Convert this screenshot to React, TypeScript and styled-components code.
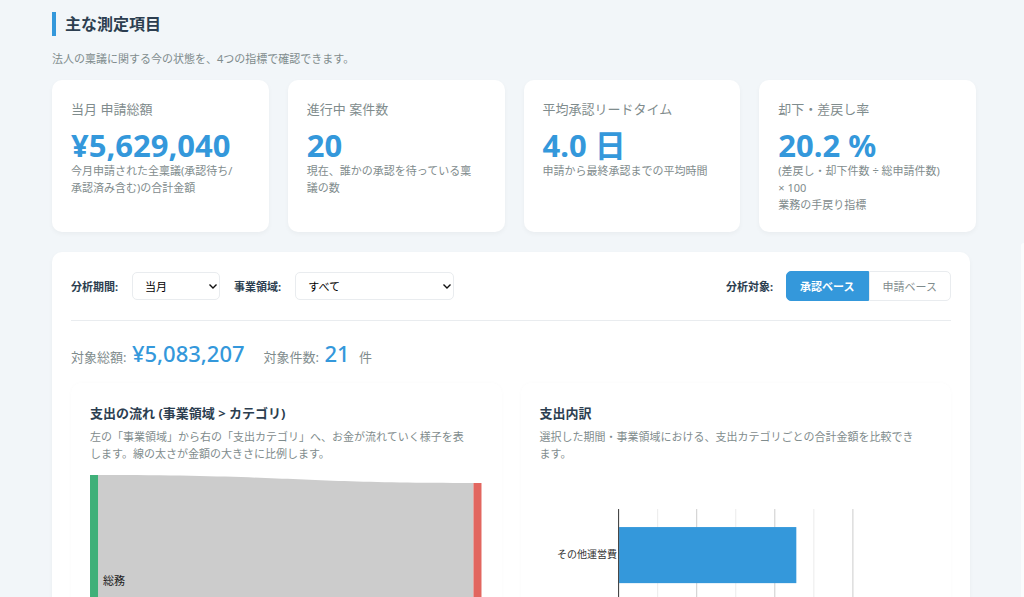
import React from 'react';
import styled, { createGlobalStyle } from 'styled-components';

const GlobalStyle = createGlobalStyle`
  * { box-sizing: border-box; }
  body {
    margin: 0;
    background: #f2f6f9;
    color: #2c3e50;
    font-family: "Noto Sans", "Noto Sans CJK JP", sans-serif;
  }
  h2, h3, p { margin: 0; }
  button, select { font-family: inherit; }
  ::-webkit-scrollbar { display: none; }
`;

const Page = styled.main`
  padding: 12px 48px 48px 52px;
`;

const SectionTitle = styled.h2`
  border-left: 4px solid #3498db;
  padding-left: 9px;
  font-size: 16px;
  line-height: 24px;
  font-weight: 700;
`;

const Lead = styled.p`
  margin: 14px 0 13px;
  color: #7f8c8d;
  font-size: 11px;
  line-height: 17px;
`;

const KpiGrid = styled.div`
  display: grid;
  grid-template-columns: repeat(4, 1fr);
  gap: 19px;
`;

const Card = styled.section`
  background: #fff;
  border-radius: 10px;
  box-shadow: 0 2px 5px rgba(0, 0, 0, 0.04);
`;

const KpiCard = styled(Card)`
  padding: 19px;
`;

const KpiName = styled.h3`
  color: #7f8c8d;
  font-size: 13px;
  line-height: 20px;
  font-weight: 400;
`;

const KpiValue = styled.p`
  margin-top: 9px;
  color: #3498db;
  font-size: 31px;
  line-height: 34px;
  font-weight: 700;
`;

const Description = styled.p`
  color: #7f8c8d;
  font-size: 11px;
  line-height: 17px;
  white-space: nowrap;
`;

const Panel = styled(Card)`
  margin: 20px 6px 0 0;
  padding: 19px;
`;

const Toolbar = styled.div`
  display: flex;
  align-items: center;
  gap: 14px;
  padding-bottom: 19px;
  border-bottom: 1px solid #e9ecef;
`;

const FieldLabel = styled.label`
  font-size: 11px;
  line-height: 17px;
  font-weight: 700;
`;

const SelectBox = styled.span<{ $width: number }>`
  position: relative;
  display: flex;
  width: ${(p) => p.$width}px;
`;

const Select = styled.select`
  appearance: none;
  width: 100%;
  height: 28px;
  padding: 0 12px;
  border: 1px solid #e9ecef;
  border-radius: 5px;
  background: #fff;
  color: #000;
  font-size: 11px;
`;

const Chevron = styled.svg`
  position: absolute;
  right: 2px;
  top: 11px;
  pointer-events: none;
`;

const Target = styled.div`
  display: flex;
  align-items: center;
  gap: 13px;
  margin-left: auto;
`;

const Segments = styled.div`
  display: flex;
`;

const Segment = styled.button<{ $active?: boolean }>`
  height: 30px;
  padding: 0 13px;
  border: 1px solid ${(p) => (p.$active ? '#3498db' : '#e9ecef')};
  border-radius: ${(p) => (p.$active ? '5px 0 0 5px' : '0 5px 5px 0')};
  background: ${(p) => (p.$active ? '#3498db' : '#fff')};
  color: ${(p) => (p.$active ? '#fff' : '#7f8c8d')};
  font-size: 11px;
  font-weight: ${(p) => (p.$active ? 700 : 400)};
`;

const Totals = styled.div`
  display: flex;
  gap: 13px;
  margin: 16px 0 10px;
  color: #7f8c8d;
  font-size: 13px;
  line-height: 32px;
`;

const TotalValue = styled.strong`
  margin: 0 6px 0 2px;
  color: #3498db;
  font-size: 22px;
  font-weight: 500;
`;

const Charts = styled.div`
  display: grid;
  grid-template-columns: 1fr 1fr;
  gap: 19px;
`;

const ChartCard = styled(Card)`
  padding: 20px 19px;
  box-shadow: 0 0 4px rgba(0, 0, 0, 0.02);
`;

const ChartTitle = styled.h3`
  margin-bottom: 5px;
  font-size: 13px;
  line-height: 20px;
  font-weight: 700;
`;

const Chart = styled.svg`
  display: block;
  width: 100%;
  margin-top: 13px;
  font-family: inherit;
`;

const DrawerEdge = styled.aside`
  position: fixed;
  top: 243px;
  right: 0;
  bottom: 0;
  width: 3px;
  border-radius: 3px 0 0 0;
  background: #fafcfd;
`;

const kpis = [
  { name: '当月 申請総額', value: '¥5,629,040', lines: ['今月申請された全稟議(承認待ち/', '承認済み含む)の合計金額'] },
  { name: '進行中 案件数', value: '20', lines: ['現在、誰かの承認を待っている稟', '議の数'] },
  { name: '平均承認リードタイム', value: '4.0 日', lines: ['申請から最終承認までの平均時間'] },
  { name: '却下・差戻し率', value: '20.2 %', lines: ['(差戻し・却下件数 ÷ 総申請件数)', '× 100', '業務の手戻り指標'] },
];

function Lines({ lines }: { lines: string[] }) {
  return (
    <Description>
      {lines.map((line, i) => (
        <React.Fragment key={line}>
          {i > 0 && <br />}
          {line}
        </React.Fragment>
      ))}
    </Description>
  );
}

function Dropdown({ id, width, value }: { id: string; width: number; value: string }) {
  return (
    <SelectBox $width={width}>
      <Select id={id}>
        <option>{value}</option>
      </Select>
      <Chevron width="10" height="7" viewBox="0 0 10 7" fill="none" stroke="#111" strokeWidth="1.4" aria-hidden="true">
        <path d="M1.5 1.5 L5 5 L8.5 1.5" />
      </Chevron>
    </SelectBox>
  );
}

function FlowChart() {
  return (
    <Chart viewBox="0 0 392 230" role="img" aria-label="支出の流れ">
      <path d="M8 0 C200 0 200 8 383 8 V222 C200 222 200 214 8 214 Z" fill="#ccc" />
      <rect x="0" y="0" width="8" height="214" fill="#3fb079" />
      <rect x="383" y="8" width="8" height="214" fill="#e2665f" />
      <text x="13" y="110" fontSize="11" fill="#222">総務</text>
    </Chart>
  );
}

function BreakdownChart() {
  const ticks = [1, 2, 3, 4, 5, 6];
  return (
    <Chart viewBox="0 0 392 230" role="img" aria-label="支出内訳">
      {ticks.map((t) => (
        <rect key={t} x={78 + t * 39} y="34" width="1" height="180" fill={t % 2 ? '#ebebeb' : '#ccc'} />
      ))}
      <rect x="79" y="52" width="177" height="56" fill="#3498db" />
      <rect x="78" y="34" width="1" height="180" fill="#333" />
      <text x="77" y="83" fontSize="10" fill="#333" textAnchor="end">その他運営費</text>
    </Chart>
  );
}

export default function App() {
  return (
    <>
      <GlobalStyle />
      <Page>
        <SectionTitle>主な測定項目</SectionTitle>
        <Lead>法人の稟議に関する今の状態を、4つの指標で確認できます。</Lead>
        <KpiGrid>
          {kpis.map((k) => (
            <KpiCard key={k.name}>
              <KpiName>{k.name}</KpiName>
              <KpiValue>{k.value}</KpiValue>
              <Lines lines={k.lines} />
            </KpiCard>
          ))}
        </KpiGrid>

        <Panel>
          <Toolbar>
            <FieldLabel htmlFor="period">分析期間:</FieldLabel>
            <Dropdown id="period" width={88} value="当月" />
            <FieldLabel htmlFor="domain">事業領域:</FieldLabel>
            <Dropdown id="domain" width={159} value="すべて" />
            <Target role="group" aria-labelledby="target">
              <FieldLabel as="span" id="target">分析対象:</FieldLabel>
              <Segments>
                <Segment type="button" $active aria-pressed="true">承認ベース</Segment>
                <Segment type="button" aria-pressed="false">申請ベース</Segment>
              </Segments>
            </Target>
          </Toolbar>

          <Totals>
            <span>対象総額: <TotalValue>¥5,083,207</TotalValue></span>
            <span>対象件数: <TotalValue>21</TotalValue> 件</span>
          </Totals>

          <Charts>
            <ChartCard>
              <ChartTitle>支出の流れ (事業領域 &gt; カテゴリ)</ChartTitle>
              <Lines lines={['左の「事業領域」から右の「支出カテゴリ」へ、お金が流れていく様子を表', 'します。線の太さが金額の大きさに比例します。']} />
              <FlowChart />
            </ChartCard>
            <ChartCard>
              <ChartTitle>支出内訳</ChartTitle>
              <Lines lines={['選択した期間・事業領域における、支出カテゴリごとの合計金額を比較でき', 'ます。']} />
              <BreakdownChart />
            </ChartCard>
          </Charts>
        </Panel>
      </Page>
      <DrawerEdge />
    </>
  );
}
